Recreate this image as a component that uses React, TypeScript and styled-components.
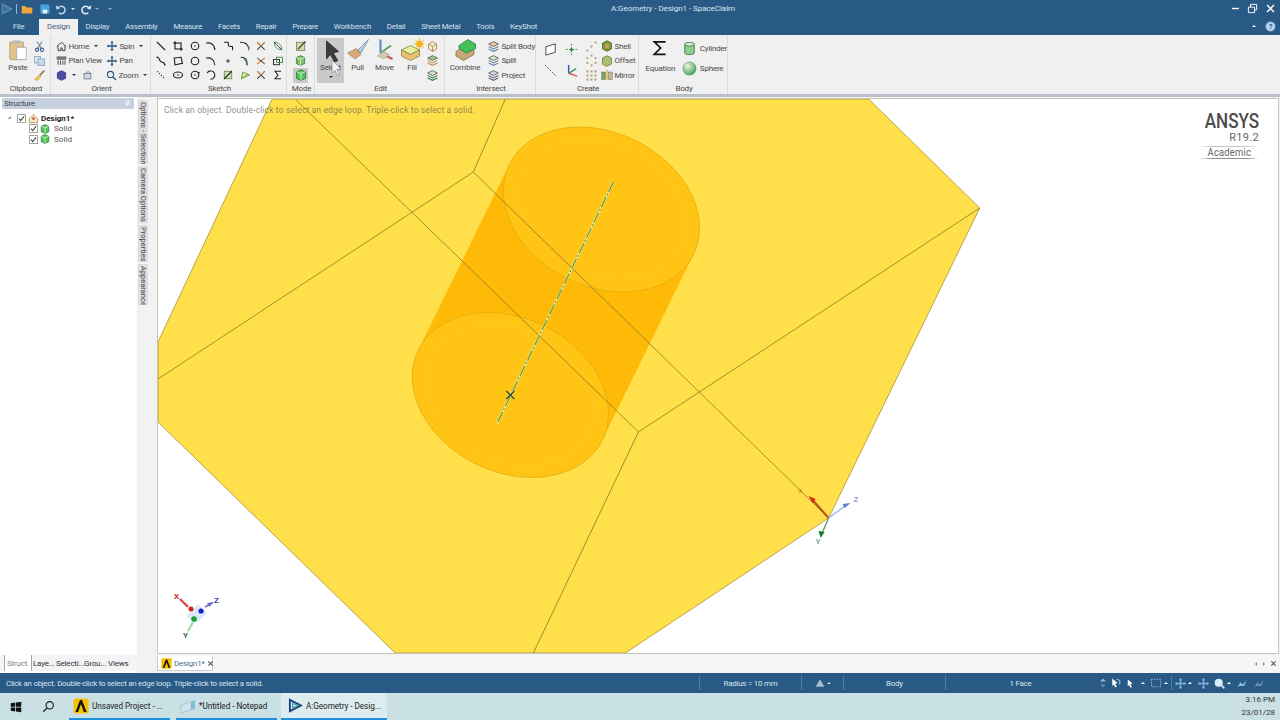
import React from 'react';
import styled, { createGlobalStyle } from 'styled-components';

const FONT = `Roboto, "Liberation Sans", sans-serif`;
const BLUE = '#295a86';

const GlobalStyle = createGlobalStyle`
  html, body { margin: 0; padding: 0; background: #f0f0f0; }
  body { font-family: ${FONT}; font-size: 8px; letter-spacing: -0.2px; color: #333; overflow: hidden; }
`;

const Window = styled.div`
  width: 1280px;
  height: 720px;
  display: flex;
  flex-direction: column;
  position: relative;
  overflow: hidden;
`;

const Gap = styled.span<{ $w: number }>`
  display: inline-block;
  flex: none;
  width: ${(p) => p.$w}px;
`;

/* ---------- title bar and tabs ---------- */

const TitleBar = styled.div`
  height: 17px;
  background: ${BLUE};
  display: flex;
  align-items: center;
  color: #dbe6ef;
`;

const Quick = styled.div`
  width: 611px;
  display: flex;
  align-items: center;
  padding-left: 1px;
  box-sizing: border-box;
`;

const QuickBar = styled.span`
  width: 1px;
  height: 10px;
  background: #9fb6ca;
`;

const Title = styled.div`
  font-size: 8px;
  letter-spacing: -0.05px;
  flex: 1;
`;

const WinControls = styled.div`
  display: flex;
  align-items: center;
  gap: 6.5px;
  padding-right: 4.5px;
`;

const TabBar = styled.div`
  height: 18px;
  background: ${BLUE};
  display: flex;
  align-items: stretch;
  padding-left: 5px;
`;

const Tab = styled.div<{ $active?: boolean; $mr?: number }>`
  padding: 0 7.9px 1px;
  margin-right: ${(p) => p.$mr ?? 0}px;
  display: flex;
  align-items: center;
  font-size: 7.8px;
  letter-spacing: -0.2px;
  color: ${(p) => (p.$active ? '#48607a' : '#d5e2ec')};
  background: ${(p) => (p.$active ? '#f0f0f0' : 'transparent')};
  margin-top: 2px;
  white-space: nowrap;
`;

const TabRight = styled.div`
  margin-left: auto;
  display: flex;
  align-items: center;
  gap: 9px;
  padding-right: 4px;
`;

/* ---------- ribbon ---------- */

const Ribbon = styled.div`
  height: 59px;
  background: #f0f0f0;
  display: flex;
`;

const RibbonRule = styled.div`
  height: 3px;
  background: #b9c0ca;
`;

const Group = styled.div<{ $w: number }>`
  width: ${(p) => p.$w}px;
  display: flex;
  flex-direction: column;
  border-right: 1px solid #dcdcdc;
  box-sizing: border-box;
`;

const GroupBody = styled.div<{ $pl?: number }>`
  height: 47px;
  padding: 3px 0 0 ${(p) => p.$pl ?? 0}px;
  display: flex;
`;

const GroupLabel = styled.div`
  height: 10px;
  line-height: 10px;
  text-align: center;
  padding-left: 2px;
  color: #4a4a4a;
  font-size: 8px;
`;

const Stack = styled.div<{ $w?: number; $ml?: number; $pt?: number }>`
  display: flex;
  flex-direction: column;
  padding-top: ${(p) => p.$pt ?? 1}px;
  margin-left: ${(p) => p.$ml ?? 0}px;
  ${(p) => (p.$w ? `width: ${p.$w}px;` : '')}
`;

const ToolRow = styled.div<{ $h?: number; $center?: boolean; $gap?: number }>`
  height: ${(p) => p.$h ?? 14.5}px;
  display: flex;
  align-items: center;
  gap: ${(p) => p.$gap ?? 1.5}px;
  color: #4a4a4a;
  font-size: 8px;
  white-space: nowrap;
  ${(p) => (p.$center ? 'justify-content: center;' : '')}
`;

const BigTool = styled.div<{ $w: number; $active?: boolean }>`
  width: ${(p) => p.$w}px;
  height: 45px;
  display: flex;
  flex-direction: column;
  align-items: center;
  color: #4a4a4a;
  font-size: 8px;
  box-sizing: border-box;
  background: ${(p) => (p.$active ? '#c9c9c9' : 'transparent')};
`;

const BigLabel = styled.div<{ $mt?: number }>`
  margin-top: ${(p) => p.$mt ?? 0}px;
  height: 11px;
  line-height: 11px;
`;

const Caret = styled.span<{ $up?: boolean; $c?: string; $ml?: number; $mt?: number; $turn?: number }>`
  display: inline-block;
  flex: none;
  width: 0;
  height: 0;
  margin-left: ${(p) => p.$ml ?? 2}px;
  margin-top: ${(p) => p.$mt ?? 0}px;
  border-left: 2px solid transparent;
  border-right: 2px solid transparent;
  ${(p) =>
    p.$up
      ? `border-bottom: 2.5px solid ${p.$c ?? '#333'};`
      : `border-top: 2.5px solid ${p.$c ?? '#333'};`}
  ${(p) => (p.$turn ? `transform: rotate(${p.$turn}deg);` : '')}
`;

const SketchGrid = styled.div`
  display: grid;
  grid-template-columns: repeat(8, 16.7px);
  grid-auto-rows: 14.5px;
  padding-top: 1px;
  padding-left: 2px;
  place-items: center;
`;

const ModeCell = styled.div<{ $active?: boolean }>`
  width: 15px;
  height: 14.5px;
  display: flex;
  align-items: center;
  justify-content: center;
  background: ${(p) => (p.$active ? '#c9c9c9' : 'transparent')};
`;

/* ---------- workspace ---------- */

const Workspace = styled.div`
  flex: 1;
  display: flex;
  min-height: 0;
  background: #f2f2f2;
`;

const LeftPane = styled.div`
  width: 137px;
  background: #fff;
  display: flex;
  flex-direction: column;
`;

const PaneHeader = styled.div`
  height: 11px;
  margin: 1px 3px 0 2px;
  padding: 0 3px 0 2px;
  background: #c6d0de;
  color: #445;
  font-size: 8px;
  line-height: 11px;
  display: flex;
  justify-content: space-between;
  align-items: center;
`;

const Tree = styled.div`
  flex: 1;
  padding-top: 4px;
`;

const TreeRow = styled.div<{ $indent: number; $root?: boolean }>`
  height: 10.5px;
  display: flex;
  align-items: center;
  gap: 2px;
  padding-left: ${(p) => p.$indent}px;
  font-size: 8px;
  letter-spacing: ${(p) => (p.$root ? '0' : '0.1px')};
  color: ${(p) => (p.$root ? '#222' : '#555')};
  font-weight: ${(p) => (p.$root ? 700 : 400)};
`;

const TreeLabel = styled.span`
  margin-left: 2px;
`;

const CheckBox = styled.span`
  width: 7px;
  height: 7px;
  border: 1px solid #a4a4a4;
  background: #fff;
  display: inline-flex;
  align-items: center;
  justify-content: center;
  flex: none;
`;

const PaneTabs = styled.div`
  height: 16px;
  background: #f4f4f6;
  display: flex;
  align-items: center;
  padding-left: 4px;
  margin-bottom: 2px;
`;

const PaneTab = styled.div<{ $active?: boolean; $w: number }>`
  width: ${(p) => p.$w}px;
  height: 100%;
  display: flex;
  align-items: center;
  padding-left: ${(p) => (p.$active ? 2 : 1)}px;
  box-sizing: border-box;
  font-size: 8px;
  color: ${(p) => (p.$active ? '#7a8595' : '#333')};
  background: ${(p) => (p.$active ? '#fff' : 'transparent')};
  border-left: ${(p) => (p.$active ? '1px solid #9aa' : 'none')};
  border-right: ${(p) => (p.$active ? '1px solid #9aa' : 'none')};
  white-space: nowrap;
`;

const Rail = styled.div`
  width: 20px;
  padding-top: 3px;
  display: flex;
  flex-direction: column;
  gap: 2px;
  box-sizing: border-box;
`;

const RailTab = styled.div<{ $h: number }>`
  width: 10px;
  margin-left: 1px;
  height: ${(p) => p.$h}px;
  background: #dedede;
  color: #444;
  font-size: 7.5px;
  line-height: 10px;
  letter-spacing: 0;
  writing-mode: vertical-rl;
  padding-top: 2px;
  box-sizing: border-box;
  white-space: nowrap;
  overflow: hidden;
`;

const Center = styled.div`
  flex: 1;
  display: flex;
  flex-direction: column;
  min-width: 0;
`;

const Viewport = styled.div`
  flex: 1;
  margin: 1px 1px 1px 0;
  border: 1px solid #c8c4b6;
  background: #fff;
  position: relative;
  overflow: hidden;
`;

const Scene = styled.svg`
  display: block;
  width: 100%;
  height: 100%;
`;

const Hint = styled.div`
  position: absolute;
  left: 6px;
  top: 6px;
  font-size: 8.5px;
  letter-spacing: 0.13px;
  color: rgba(85, 85, 85, 0.68);
  white-space: nowrap;
`;

const Brand = styled.div`
  position: absolute;
  right: 19px;
  top: 13px;
  width: 60px;
  display: flex;
  flex-direction: column;
  align-items: flex-end;
  color: #4c4c4c;
`;

const BrandName = styled.div`
  font-size: 19.5px;
  line-height: 19px;
  font-weight: 500;
  letter-spacing: 0;
  transform: scaleX(0.875);
  transform-origin: right center;
`;

const BrandVersion = styled.div`
  margin-top: 1px;
  font-size: 11px;
  line-height: 12px;
  letter-spacing: 0.3px;
  color: #666;
`;

const BrandTier = styled.div`
  margin-top: 2px;
  align-self: stretch;
  text-align: center;
  font-size: 11px;
  line-height: 13px;
  letter-spacing: 0.2px;
  color: #666;
  background-image: linear-gradient(90deg, transparent, #c4c4c4 20%, #c4c4c4 80%, transparent),
    linear-gradient(90deg, transparent, #8c8c8c 20%, #8c8c8c 80%, transparent);
  background-size: 100% 1px;
  background-position: top, bottom;
  background-repeat: no-repeat;
`;

const BrandTierText = styled.span`
  display: inline-block;
  transform: scaleX(0.86);
`;

const DocTabs = styled.div`
  height: 18px;
  background: #f6f6f8;
  display: flex;
  align-items: flex-start;
  padding-top: 1px;
  box-sizing: border-box;
`;

const DocTab = styled.div`
  width: 56px;
  height: 15px;
  display: flex;
  align-items: center;
  gap: 2px;
  padding-left: 3px;
  box-sizing: border-box;
  border: 1px solid #c9c9c9;
  border-top: none;
  background: #fff;
  font-size: 8px;
  color: #52708f;
`;

const DocNav = styled.div`
  margin-left: auto;
  height: 15px;
  display: flex;
  align-items: center;
  gap: 4px;
  padding-right: 3px;
`;

/* ---------- status bar ---------- */

const StatusBar = styled.div`
  height: 20px;
  background: ${BLUE};
  display: flex;
  align-items: center;
  color: #d8e3ec;
  font-size: 7.9px;
`;

const StatusText = styled.div`
  flex: none;
  width: 699px;
  padding-left: 6px;
  box-sizing: border-box;
  letter-spacing: -0.25px;
`;

const StatusCell = styled.div<{ $w: number }>`
  flex: none;
  width: ${(p) => p.$w}px;
  height: 14px;
  border-left: 1px solid #4f7da6;
  display: flex;
  align-items: center;
  justify-content: center;
  box-sizing: border-box;
`;

const StatusTools = styled.div`
  flex: 1;
  display: flex;
  align-items: center;
  padding-left: 2px;
`;

const StatusSep = styled.span`
  width: 1px;
  height: 14px;
  background: #4f7da6;
`;

/* ---------- taskbar ---------- */

const Taskbar = styled.div`
  height: 27px;
  background: #c9e0e5;
  display: flex;
  align-items: stretch;
  color: #222;
`;

const TaskIcon = styled.div<{ $w: number }>`
  width: ${(p) => p.$w}px;
  display: flex;
  align-items: center;
  justify-content: center;
`;

const TaskButton = styled.div<{ $w: number; $active?: boolean; $ml?: number; $pl?: number }>`
  width: ${(p) => p.$w}px;
  margin-left: ${(p) => p.$ml ?? 0}px;
  display: flex;
  align-items: center;
  gap: 3px;
  padding-left: ${(p) => p.$pl ?? 4}px;
  box-sizing: border-box;
  font-size: 8.2px;
  letter-spacing: -0.05px;
  white-space: nowrap;
  background: ${(p) => (p.$active ? '#dcecef' : 'transparent')};
  border-bottom: 2px solid #1d8fdc;
`;

const Clock = styled.div`
  margin-left: auto;
  padding-right: 5px;
  display: flex;
  flex-direction: column;
  align-items: flex-end;
  justify-content: center;
  gap: 5px;
  font-size: 8px;
  line-height: 8px;
  letter-spacing: 0;
  color: #333;
`;

const Pointer = styled.svg`
  position: absolute;
  left: 331px;
  top: 59px;
`;

/* ---------- icons ---------- */

const Ico: React.FC<{ s?: number; w?: number; children: React.ReactNode }> = ({ s = 13, w, children }) => (
  <svg width={w ?? s} height={s} viewBox="0 0 16 16" fill="none" style={{ flex: 'none' }}>
    {children}
  </svg>
);

const k = { stroke: '#222', strokeWidth: 1.5, strokeLinecap: 'round' as const };
const dot = (x: number, y: number, c = '#222', r = 1.1) => <circle cx={x} cy={y} r={r} fill={c} />;

const XMark = ({ c = '#d9822b' }) => (
  <>
    <path d="M3 3l10 10M13 3L3 13" stroke="#222" strokeWidth={1.4} />
    <path d="M3 3l5 5M13 3L8 8" stroke={c} strokeWidth={1.4} />
  </>
);

const sketchIcons: React.ReactNode[] = [
  <path d="M3 3l10 10" {...k} />,
  <><rect x="4" y="4" width="8" height="8" {...k} /><path d="M2 4h3M12 12h2M4 2v3M12 11v3" {...k} /></>,
  <><circle cx="8" cy="8" r="5" {...k} />{dot(8, 8)}</>,
  <><path d="M2 4c6-1 10 2 11 8" {...k} />{dot(13, 12)}</>,
  <path d="M3 3h5l1 5 5 1v4" {...k} />,
  <><path d="M2 3c6 0 10 3 11 8" {...k} /><path d="M13 8v6" stroke="#2a8a4a" strokeWidth={1.5} /></>,
  <XMark />,
  <><path d="M3 3c6 0 10 4 10 10C7 13 3 9 3 3z" stroke="#3d8f4f" strokeWidth={1.2} /><path d="M3 3l10 10" stroke="#222" /></>,
  <><path d="M3 3c4 0 2 5 5 6s5 1 5 4" {...k} />{dot(3, 3)}{dot(13, 13)}</>,
  <path d="M3 4l9-1 2 8-10 2z" {...k} />,
  <circle cx="8" cy="8" r="5" {...k} />,
  <path d="M2 4c6-1 10 2 11 9" {...k} />,
  <circle cx="8" cy="8" r="1.6" stroke="#222" strokeWidth={1.2} />,
  <><path d="M3 3c5 0 8 3 8 10" {...k} /><path d="M6 6c3 0 4 3 4 7" stroke="#2a8a4a" strokeWidth={1.2} /></>,
  <><path d="M3 12L13 4" stroke="#d9822b" strokeWidth={1.5} /><path d="M3 4l10 8" stroke="#222" strokeWidth={1.3} /></>,
  <><rect x="2" y="6" width="8" height="7" stroke="#222" strokeWidth={1.2} /><rect x="6" y="3" width="8" height="7" stroke="#3d8f4f" strokeWidth={1.2} /></>,
  <path d="M3 3l10 10" stroke="#222" strokeWidth={1.4} strokeDasharray="1.5 2" />,
  <><ellipse cx="8" cy="8" rx="6" ry="4" {...k} />{dot(8, 8)}</>,
  <><circle cx="8" cy="8" r="5" {...k} />{dot(8, 8)}{dot(13, 5, '#222', 1.3)}</>,
  <path d="M3 5a5.5 5.5 0 1 1 5 8.5" {...k} strokeDasharray="5 1.5" />,
  <><rect x="3" y="3" width="10" height="10" fill="#cfe0b8" stroke="#5a7a3a" /><path d="M3 13L13 3" stroke="#222" strokeWidth={1.5} /></>,
  <><path d="M3 13L14 8 5 4z" fill="#dfe8b0" stroke="#5f9a3a" strokeWidth={1.2} /><path d="M3 13l9-7" stroke="#a88a2a" /></>,
  <XMark />,
  <path d="M12 3H4l4 5-4 5h8" stroke="#222" strokeWidth={1.4} />,
];

const Cube = ({ c = '#52c25a', s = 12 }) => (
  <Ico s={s}>
    <path d="M8 1l6 2.5v9L8 15l-6-2.5v-9z" fill={c} stroke="#1f6f2a" />
    <path d="M8 6v9M8 6L2 3.5M8 6l6-2.5" stroke="#eafbe6" strokeWidth={1.1} />
  </Ico>
);

const LayerIcon = ({ a = '#9bc48f', b = '#c98d5a' }) => (
  <Ico s={13}>
    <path d="M8 2l6 3-6 3-6-3z" fill={a} stroke="#555" />
    <path d="M2 8l6 3 6-3M2 11l6 3 6-3" stroke={b} strokeWidth={1.4} />
  </Ico>
);

const AnsysLogo = ({ s = 16 }) => (
  <Ico s={s}>
    <rect x="0.5" y="0.5" width="15" height="15" rx="2" fill="#f6c000" />
    <path d="M2.5 14L7 2h2l4.5 12h-2.6L8 6l-2.9 8z" fill="#111" />
  </Ico>
);

const SpaceClaimLogo = ({ s = 15, dim }: { s?: number; dim?: boolean }) => (
  <Ico s={s}>
    <g opacity={dim ? 0.7 : 1}>
      <path d="M2 2l12 6-12 6z" stroke={dim ? '#7f9cc0' : '#1f3f7a'} strokeWidth={2} fill="none" />
      <path d="M5 5.5l5.5 2.5L5 10.5z" stroke="#39a0a8" strokeWidth={1.4} />
    </g>
  </Ico>
);

const Spin = ({ c = '#2a5f92', s = 13 }) => (
  <Ico s={s}>
    <path d="M8 2v12M2 8h12" stroke={c} strokeWidth={1.8} />
    <path d="M8 1l2 3H6zM8 15l2-3H6zM1 8l3-2v4zM15 8l-3-2v4z" fill={c} />
  </Ico>
);

const Zoomer = ({ c = '#244f7a' }) => (
  <Ico s={11}>
    <circle cx="6.5" cy="6.5" r="4.5" stroke={c} strokeWidth={1.5} fill="#dff0fb" />
    <path d="M10 10l4.5 4.5" stroke={c} strokeWidth={2} />
  </Ico>
);

const Tick = () => (
  <svg width="7" height="7" viewBox="0 0 8 8" fill="none">
    <path d="M1 4l2 2.5L7 1.5" stroke="#3a4a3a" strokeWidth={1.2} />
  </svg>
);

const CloseX = () => (
  <Ico s={7}>
    <path d="M3 3l10 10M13 3L3 13" stroke="#555" strokeWidth={2.4} />
  </Ico>
);

/* ---------- 3D scene ---------- */

const Cap = ({ cx, cy }: { cx: number; cy: number }) => (
  <g transform={`translate(${cx} ${cy}) rotate(26)`}>
    <ellipse rx={102.4} ry={77} fill="#ffc414" stroke="#e0aa10" strokeWidth={0.7} />
    <ellipse rx={87} ry={66} fill="none" stroke="#f9c92a" strokeWidth={0.7} />
  </g>
);

const Triad = () => (
  <g fontFamily={FONT} fontSize={8} fontWeight={700}>
    <path d="M198 604l9 9-10 10-11-6z" fill="#d6e6f8" opacity={0.9} />
    <path d="M180 599l8 8" stroke="#d84848" strokeWidth={2.4} />
    <path d="M205 607l7-4" stroke="#6f6fd8" strokeWidth={1.6} />
    <path d="M214 602l-7 1 2 4z" fill="#6f6fd8" />
    <path d="M193 622l-5 9" stroke="#a8d8a8" strokeWidth={2.4} />
    <circle cx={191} cy={609} r={2.5} fill="#d42020" />
    <circle cx={201} cy={611} r={2.6} fill="#1a1ad0" />
    <circle cx={194} cy={619} r={2.8} fill="#1f9a3a" />
    <text x={174} y={599} fill="#c83030">X</text>
    <text x={214} y={603} fill="#3a3ab0">Z</text>
    <text x={183} y={638} fill="#2a6a3a">Y</text>
  </g>
);

const Gizmo = () => (
  <g fontFamily={FONT} fontSize={8}>
    <path d="M828 518L812 500" stroke="#b8501a" strokeWidth={2} />
    <path d="M808 496l7 3-3 4z" fill="#e0201a" />
    <path d="M828 518l18-13" stroke="#a8c0ec" strokeWidth={1.6} />
    <path d="M850 503l-8 1 2 4z" fill="#5a80d8" />
    <path d="M828 518l-6 14" stroke="#6a9a5a" strokeWidth={1.4} />
    <path d="M820 538l-2-7 6 1z" fill="#0f7a2a" />
    <text x={798} y={493} fill="#c8781a">x</text>
    <text x={853} y={502} fill="#9a9ad8" fontWeight={700}>Z</text>
    <text x={815} y={544} fill="#7ab08a" fontWeight={700}>Y</text>
  </g>
);

const Scene3D = () => (
  <Scene viewBox="158 99 1119 554" preserveAspectRatio="none">
    <polygon
      points="272,99 868,99 979,208 828,518 625,653 395,653 158,422 158,342"
      fill="#ffe04a"
      stroke="#a89336"
      strokeWidth={0.8}
    />
    <polygon points="418,350 509,164.5 693,254.4 602,440" fill="#ffba08" />
    <Cap cx={601} cy={209.5} />
    <Cap cx={510} cy={395} />
    <g stroke="#8a7a22" strokeWidth={0.8} fill="none">
      <path d="M158 379L473 172L505 99" />
      <path d="M473 172L828 518" />
      <path d="M296 100L638 432L979 208" />
      <path d="M638 432L533 653" />
    </g>
    <path d="M613 182L497 423" stroke="#e8efb0" strokeWidth={1.8} />
    <path d="M613 182L497 423" stroke="#3f8f3a" strokeWidth={1} strokeDasharray="11 2 2 2" />
    <path d="M506 391l8 8M514 391l-8 8" stroke="#1e4a3a" strokeWidth={1.2} />
    <Gizmo />
    <Triad />
  </Scene>
);

/* ---------- page ---------- */

const tabs = ['File', 'Design', 'Display', 'Assembly', 'Measure', 'Facets', 'Repair', 'Prepare', 'Workbench', 'Detail', 'Sheet Metal', 'Tools', 'KeyShot'];

const railTabs: [string, number][] = [
  ['Options - Selection', 64],
  ['Camera Options', 57],
  ['Properties', 37],
  ['Appearance', 41],
];

export default function App() {
  return (
    <Window>
      <GlobalStyle />
      <TitleBar>
        <Quick>
          <SpaceClaimLogo s={12} dim />
          <Gap $w={3} />
          <QuickBar />
          <Gap $w={4} />
          <Ico s={12}><path d="M1 4h5l1 2h8v8H1z" fill="#f0a63a" /></Ico>
          <Gap $w={6} />
          <Ico s={12}><path d="M2 2h10l2 2v10H2z" fill="#4aa6e0" /><rect x="5" y="9" width="6" height="5" fill="#dff1fb" /></Ico>
          <Gap $w={4} />
          <Ico s={12}><path d="M4 7a5 5 0 1 1 1 6" stroke="#bcd7ee" strokeWidth={2} /><path d="M1 3l1 6 5-2z" fill="#bcd7ee" /></Ico>
          <Caret $c="#dbe6ef" $ml={4} />
          <Gap $w={5} />
          <Ico s={12}><path d="M12 7a5 5 0 1 0-1 6" stroke="#e4eef6" strokeWidth={2} /><path d="M15 3l-1 6-5-2z" fill="#e4eef6" /></Ico>
          <Caret $c="#8fa9c0" $ml={3} />
          <Gap $w={9} />
          <Caret $c="#8fa9c0" $ml={0} />
        </Quick>
        <Title>A:Geometry - Design1 - SpaceClaim</Title>
        <WinControls>
          <Ico s={11}><path d="M3 8h10" stroke="#fff" strokeWidth={2} /></Ico>
          <Ico s={11}><path d="M2 6h9v8H2zM5 6V2h9v8h-3" stroke="#fff" strokeWidth={1.4} /></Ico>
          <Ico s={11}><path d="M3 3l10 10M13 3L3 13" stroke="#fff" strokeWidth={2.2} /></Ico>
        </WinControls>
      </TitleBar>
      <TabBar>
        {tabs.map((t) => (
          <Tab key={t} $active={t === 'Design'} $mr={t === 'File' ? 7 : 0}>{t}</Tab>
        ))}
        <TabRight>
          <Caret $up $c="#fff" />
          <Ico s={11}>
            <circle cx="8" cy="8" r="7" fill="#bcd6f0" stroke="#5a8ac0" />
            <text x="8" y="12" textAnchor="middle" fontSize="11" fontWeight={700} fontFamily={FONT} fill="#2a5a9a">?</text>
          </Ico>
        </TabRight>
      </TabBar>

      <Ribbon>
        <Group $w={51}>
          <GroupBody $pl={7}>
            <BigTool $w={22}>
              <Ico s={24} w={22}>
                <rect x="2" y="2" width="10" height="13" rx="1" fill="#e0c48c" stroke="#a88c58" strokeWidth={0.5} />
                <rect x="4.5" y="1" width="5" height="2.5" fill="#b9b9b9" />
                <path d="M7 6h7v9H7z" fill="#fff" stroke="#999" strokeWidth={0.5} />
              </Ico>
              <BigLabel>Paste</BigLabel>
            </BigTool>
            <Stack $ml={4}>
              <ToolRow><Ico s={13}><path d="M5 2l5 8M11 2L6 10" stroke="#7a8a9a" strokeWidth={1.3} /><circle cx="5" cy="12" r="2" stroke="#3a5a8a" strokeWidth={1.3} /><circle cx="11" cy="12" r="2" stroke="#3a5a8a" strokeWidth={1.3} /></Ico></ToolRow>
              <ToolRow><Ico s={13}><rect x="2" y="3" width="7" height="8" fill="#dfe9f5" stroke="#7f9cc0" /><rect x="6" y="6" width="8" height="8" fill="#c8daf0" stroke="#7f9cc0" /></Ico></ToolRow>
              <ToolRow><Ico s={13}><path d="M14 2L8 8" stroke="#8a7a5a" strokeWidth={2} /><path d="M8 7l2 2-4 5-4-1z" fill="#e8c84a" stroke="#a88a2a" strokeWidth={0.5} /></Ico></ToolRow>
            </Stack>
          </GroupBody>
          <GroupLabel>Clipboard</GroupLabel>
        </Group>

        <Group $w={100}>
          <GroupBody $pl={5}>
            <Stack $w={50}>
              <ToolRow><Ico s={11}><path d="M1 8l7-6 7 6M3 7v7h4v-4h2v4h4V7" stroke="#333" strokeWidth={1.3} /></Ico>Home<Caret $ml={3} /></ToolRow>
              <ToolRow><Ico s={11}><rect x="1" y="2" width="14" height="5" fill="#777" /><path d="M3 8v6M6.5 8v6M10 8v6M13 8v6" stroke="#555" strokeWidth={1.5} /></Ico>Plan View</ToolRow>
              <ToolRow><Ico s={11}><path d="M8 1l6 3v8l-6 3-6-3V4z" fill="#4e4ea8" stroke="#2a2a70" /></Ico><Caret $ml={3} /><Gap $w={3} /><Ico s={11}><rect x="3" y="5" width="10" height="8" fill="#cfd8e2" stroke="#667" /><path d="M5 5l4-3 4 3" stroke="#667" /></Ico></ToolRow>
            </Stack>
            <Stack $w={44}>
              <ToolRow><Spin s={12} />Spin<Caret $ml={3} /></ToolRow>
              <ToolRow><Spin s={12} c="#3a5f88" />Pan</ToolRow>
              <ToolRow><Zoomer />Zoom<Caret $ml={3} /></ToolRow>
            </Stack>
          </GroupBody>
          <GroupLabel>Orient</GroupLabel>
        </Group>

        <Group $w={136}>
          <GroupBody>
            <SketchGrid>
              {sketchIcons.map((icon, i) => (
                <Ico key={i} s={12}>{icon}</Ico>
              ))}
            </SketchGrid>
          </GroupBody>
          <GroupLabel>Sketch</GroupLabel>
        </Group>

        <Group $w={28}>
          <GroupBody $pl={6}>
            <Stack>
              <ModeCell><Ico s={12}><rect x="2" y="3" width="11" height="11" fill="#cfe0a8" stroke="#6a7a4a" /><path d="M4 12L14 2" stroke="#444" strokeWidth={1.6} /></Ico></ModeCell>
              <ModeCell><Cube s={11} c="#7fbf6a" /></ModeCell>
              <ModeCell $active><Cube s={12} /></ModeCell>
            </Stack>
          </GroupBody>
          <GroupLabel>Mode</GroupLabel>
        </Group>

        <Group $w={130}>
          <GroupBody $pl={2}>
            <BigTool $w={27} $active>
              <Ico s={24}><path d="M5 2l8 7-3.5 1 3 5-2 1-3-5-2.5 3z" fill="#3c3c3c" stroke="#222" strokeWidth={0.5} /></Ico>
              <BigLabel>Select</BigLabel>
              <Caret $ml={0} $mt={3} />
            </BigTool>
            <BigTool $w={27}>
              <Ico s={24}><path d="M1 10l6-3 3 4-4 3z" fill="#d8a878" stroke="#a07848" strokeWidth={0.4} /><path d="M15 1L8 8l2 2z" fill="#b8cce4" stroke="#6a8ab0" strokeWidth={0.5} /></Ico>
              <BigLabel>Pull</BigLabel>
            </BigTool>
            <BigTool $w={27}>
              <Ico s={24}><path d="M5 1v9" stroke="#5a8ac8" strokeWidth={1.4} /><path d="M5 10l8 4" stroke="#c85a5a" strokeWidth={1.4} /><path d="M5 10l7-5" stroke="#5aa85a" strokeWidth={1.4} /><path d="M3 12l4-3 4 2-4 3z" fill="#d8c8b0" stroke="#998" strokeWidth={0.4} /></Ico>
              <BigLabel>Move</BigLabel>
            </BigTool>
            <BigTool $w={28}>
              <Ico s={24}><path d="M1 8l6-3 6 3-6 3z" fill="#dff0a0" stroke="#6a8a3a" strokeWidth={0.5} /><path d="M1 8v4l6 3 6-3V8l-6 3z" fill="#e8c070" stroke="#8a7a3a" strokeWidth={0.5} /><circle cx="13" cy="4" r="2.2" fill="#f6b21a" /><path d="M13 0v8M9 4h8M10 1l6 6M16 1l-6 6" stroke="#f6b21a" strokeWidth={0.6} /></Ico>
              <BigLabel>Fill</BigLabel>
            </BigTool>
            <Stack>
              <ToolRow $center><Ico s={13}><path d="M8 2l5 3v6l-5 3-5-3V5z" fill="#f4e8d0" stroke="#a8804a" /><path d="M8 8V14M3 5l5 3 5-3" stroke="#a8804a" /></Ico></ToolRow>
              <ToolRow $center><LayerIcon /></ToolRow>
              <ToolRow $center><LayerIcon a="#cfe8c0" b="#3a7a5a" /></ToolRow>
            </Stack>
          </GroupBody>
          <GroupLabel>Edit</GroupLabel>
        </Group>

        <Group $w={91}>
          <GroupBody>
            <BigTool $w={40}>
              <Ico s={24} w={26}>
                <path d="M2 9l7-4 5 3v3l-7 4-5-3z" fill="#c8a878" stroke="#7a6a4a" strokeWidth={0.5} />
                <path d="M4 5l6-4 5 3v3l-6 3-5-3z" fill="#45c05a" stroke="#1f7a3a" strokeWidth={0.5} />
              </Ico>
              <BigLabel>Combine</BigLabel>
            </BigTool>
            <Stack $ml={2}>
              <ToolRow><LayerIcon a="#e8c8a0" b="#5a8aa0" />Split Body</ToolRow>
              <ToolRow><LayerIcon a="#cfe8c0" b="#6a8ab0" />Split</ToolRow>
              <ToolRow><LayerIcon a="#c8d8e8" b="#667" />Project</ToolRow>
            </Stack>
          </GroupBody>
          <GroupLabel>Intersect</GroupLabel>
        </Group>

        <Group $w={103}>
          <GroupBody $pl={3}>
            <Stack $w={22}>
              <ToolRow $h={21} $center><Ico s={15}><path d="M3 5l10-3v9L3 14z" fill="#fff" stroke="#444" /></Ico></ToolRow>
              <ToolRow $h={21} $center><Ico s={15}><path d="M2 2l12 12" stroke="#555" strokeDasharray="2 1.5" /></Ico></ToolRow>
            </Stack>
            <Stack $w={21}>
              <ToolRow $h={21} $center><Ico s={13}><path d="M8 1v14M1 8h14" stroke="#2a8a4a" strokeDasharray="2.5 1.5" /><circle cx="8" cy="8" r="2" fill="#2a8a4a" /></Ico></ToolRow>
              <ToolRow $h={21} $center><Ico s={15}><path d="M5 11V2" stroke="#3a5ac8" strokeWidth={1.6} /><path d="M5 11l9 3" stroke="#d85a5a" strokeWidth={1.6} /><path d="M5 11l8-5" stroke="#3a9a5a" strokeWidth={1.6} /></Ico></ToolRow>
            </Stack>
            <Stack $w={19}>
              <ToolRow $center><Ico s={13}>{dot(3, 13, '#bba27a', 1.4)}{dot(8, 8, '#bba27a', 1.4)}{dot(13, 3, '#bba27a', 1.4)}</Ico></ToolRow>
              <ToolRow $center><Ico s={13}>{dot(8, 2, '#bba27a', 1.4)}{dot(13, 5, '#bba27a', 1.4)}{dot(13, 11, '#bba27a', 1.4)}{dot(8, 14, '#bba27a', 1.4)}{dot(3, 11, '#bba27a', 1.4)}{dot(3, 5, '#bba27a', 1.4)}</Ico></ToolRow>
              <ToolRow $center><Ico s={13}>{[3, 8, 13].flatMap((x) => [3, 8, 13].map((y) => <rect key={`${x}-${y}`} x={x - 1.3} y={y - 1.3} width="2.6" height="2.6" fill="#bba27a" />))}</Ico></ToolRow>
            </Stack>
            <Stack>
              <ToolRow><Ico s={12}><path d="M8 1l6 3v8l-6 3-6-3V4z" fill="#7a9a3a" stroke="#44602a" /><circle cx="8" cy="8" r="3" fill="#c8a060" /></Ico>Shell</ToolRow>
              <ToolRow><Ico s={12}><path d="M8 1l6 3v8l-6 3-6-3V4z" fill="#a8c070" stroke="#5a7a3a" /><path d="M1 11l6 4" stroke="#c8a060" strokeWidth={2} /></Ico>Offset</ToolRow>
              <ToolRow><Ico s={12}><rect x="1" y="4" width="5" height="10" fill="#7aa85a" stroke="#446" strokeWidth={0.5} /><rect x="10" y="4" width="5" height="10" fill="#c8b888" stroke="#446" strokeWidth={0.5} /><path d="M8 1v14" stroke="#e0a020" strokeWidth={1.4} /></Ico>Mirror</ToolRow>
            </Stack>
          </GroupBody>
          <GroupLabel>Create</GroupLabel>
        </Group>

        <Group $w={89}>
          <GroupBody $pl={3}>
            <BigTool $w={38}>
              <Ico s={20}><path d="M12.5 3H3.5l5 5-5 5h9" stroke="#111" strokeWidth={1.4} /></Ico>
              <BigLabel $mt={5}>Equation</BigLabel>
            </BigTool>
            <Stack $ml={3} $pt={0}>
              <ToolRow $h={20} $gap={3}>
                <Ico s={15}><path d="M3 3v10c0 2 10 2 10 0V3" fill="#8fcf8f" stroke="#3f7a4f" /><ellipse cx="8" cy="3.5" rx="5" ry="2" fill="#d8f0d8" stroke="#3f7a4f" /></Ico>Cylinder
              </ToolRow>
              <ToolRow $h={20} $gap={3}>
                <Ico s={15}>
                  <defs>
                    <radialGradient id="sph" cx="0.35" cy="0.3" r="0.8">
                      <stop offset="0" stopColor="#e8f8e0" />
                      <stop offset="1" stopColor="#3f9a4f" />
                    </radialGradient>
                  </defs>
                  <circle cx="8" cy="8" r="7" fill="url(#sph)" stroke="#3f7a4f" strokeWidth={0.5} />
                </Ico>Sphere
              </ToolRow>
            </Stack>
          </GroupBody>
          <GroupLabel>Body</GroupLabel>
        </Group>
      </Ribbon>
      <RibbonRule />

      <Workspace>
        <LeftPane>
          <PaneHeader>
            Structure
            <Ico s={7}><path d="M5 2h6v7H5zM8 9v5M3 9h10" stroke="#fff" strokeWidth={1.6} /></Ico>
          </PaneHeader>
          <Tree>
            <TreeRow $indent={8} $root>
              <Caret $ml={0} $c="#777" $turn={-45} />
              <Gap $w={1} />
              <CheckBox><Tick /></CheckBox>
              <Ico s={11}><path d="M2 8l6-6 6 6v6H2z" fill="#f2e4cc" stroke="#a8804a" /><circle cx="8" cy="8" r="2" fill="#c85a3a" /></Ico>
              <span>Design1*</span>
            </TreeRow>
            <TreeRow $indent={29}>
              <CheckBox><Tick /></CheckBox>
              <Cube s={10} />
              <TreeLabel>Solid</TreeLabel>
            </TreeRow>
            <TreeRow $indent={29}>
              <CheckBox><Tick /></CheckBox>
              <Cube s={10} />
              <TreeLabel>Solid</TreeLabel>
            </TreeRow>
          </Tree>
          <PaneTabs>
            <PaneTab $active $w={28}>Struct.</PaneTab>
            <PaneTab $w={23}>Laye...</PaneTab>
            <PaneTab $w={28}>Selecti...</PaneTab>
            <PaneTab $w={24}>Grou...</PaneTab>
            <PaneTab $w={26}>Views</PaneTab>
          </PaneTabs>
        </LeftPane>
        <Rail>
          {railTabs.map(([label, h]) => (
            <RailTab key={label} $h={h}>{label}</RailTab>
          ))}
        </Rail>
        <Center>
          <Viewport>
            <Scene3D />
            <Hint>Click an object. Double-click to select an edge loop. Triple-click to select a solid.</Hint>
            <Brand>
              <BrandName>ANSYS</BrandName>
              <BrandVersion>R19.2</BrandVersion>
              <BrandTier><BrandTierText>Academic</BrandTierText></BrandTier>
            </Brand>
          </Viewport>
          <DocTabs>
            <DocTab>
              <AnsysLogo s={11} />
              Design1*
              <CloseX />
            </DocTab>
            <DocNav>
              <Caret $ml={0} $c="#888" $turn={90} />
              <Caret $ml={0} $c="#888" $turn={-90} />
              <CloseX />
            </DocNav>
          </DocTabs>
        </Center>
      </Workspace>

      <StatusBar>
        <StatusText>Click an object. Double-click to select an edge loop. Triple-click to select a solid.</StatusText>
        <StatusCell $w={102}>Radius = 10 mm</StatusCell>
        <StatusCell $w={42}>
          <Ico s={10}><path d="M8 2l7 12H1z" fill="#a8bccd" /></Ico>
          <Caret $up $c="#c8d6e2" />
        </StatusCell>
        <StatusCell $w={102}>Body</StatusCell>
        <StatusCell $w={150}>1 Face</StatusCell>
        <StatusTools>
          <Ico s={12}><path d="M8 2l4 4H4z" fill="#9fb6ca" /><path d="M8 14l4-4H4z" fill="#5f86a8" /></Ico>
          <Gap $w={1} />
          <Ico s={12}><path d="M3 2l7 6-3 1 2 4-2 1-2-4-2 2z" fill="#fff" /><path d="M9 3a4 4 0 0 1 3 7" stroke="#b8d0e6" strokeWidth={1.3} /></Ico>
          <Gap $w={3} />
          <Ico s={11}><path d="M4 2l7 6-3 1 2 4-2 1-2-4-2 2z" fill="#fff" /></Ico>
          <Gap $w={5} />
          <Caret $up $c="#fff" $ml={0} />
          <Gap $w={5} />
          <Ico s={12}><rect x="2" y="3" width="12" height="10" stroke="#b8d0e6" strokeDasharray="2 1.5" /></Ico>
          <Gap $w={2} />
          <Caret $up $c="#fff" $ml={0} />
          <Gap $w={3} />
          <StatusSep />
          <Gap $w={2} />
          <Spin s={13} c="#7fb0dc" />
          <Gap $w={1} />
          <Caret $up $c="#fff" $ml={0} />
          <Gap $w={4.5} />
          <Spin s={13} c="#7fb0dc" />
          <Gap $w={3} />
          <Ico s={13}><circle cx="7" cy="7" r="5" fill="#dcecf8" /><path d="M10 10l4 4" stroke="#dcecf8" strokeWidth={2} /></Ico>
          <Gap $w={1} />
          <Caret $up $c="#fff" $ml={0} />
          <Gap $w={5.5} />
          <Ico s={12}><path d="M2 13l4-6 3 3 5-6-3 8H5z" fill="#8fc0ea" /></Ico>
          <Gap $w={5} />
          <Ico s={12}><path d="M2 13l4-6 3 3 5-6-3 8H5z" fill="#6f8ca6" /></Ico>
        </StatusTools>
      </StatusBar>

      <Taskbar>
        <TaskIcon $w={32}>
          <Ico s={12}><path d="M1 3l6-1v5.5H1zM8 2l7-1v6.5H8zM1 8.5h6V14l-6-1zM8 8.5h7V15l-7-1z" fill="#111" /></Ico>
        </TaskIcon>
        <TaskIcon $w={32}>
          <Ico s={13}><circle cx="9.5" cy="6.5" r="4.5" stroke="#111" strokeWidth={1.3} /><path d="M6 10l-4.5 4.5" stroke="#111" strokeWidth={1.5} /></Ico>
        </TaskIcon>
        <TaskButton $w={101} $ml={5}>
          <AnsysLogo />
          Unsaved Project - ...
        </TaskButton>
        <TaskButton $w={101} $ml={6}>
          <Ico s={16}><path d="M1 7l10-3v8L1 15z" fill="#cfe4ee" stroke="#8fb0c0" strokeWidth={0.5} /><path d="M11 4l4-2v9l-4 1z" fill="#7fc0d8" /></Ico>
          *Untitled - Notepad
        </TaskButton>
        <TaskButton $w={106} $ml={4} $active $pl={7}>
          <SpaceClaimLogo />
          A:Geometry - Desig...
        </TaskButton>
        <Clock>
          <span>3:16 PM</span>
          <span>23/01/28</span>
        </Clock>
      </Taskbar>

      <Pointer width="12" height="18" viewBox="0 0 12 18">
        <path d="M1 1l9 9-4 .5 2.5 5.5-2 1L4 11.5 1 14z" fill="#f4f4f4" stroke="#777" strokeWidth={0.6} />
      </Pointer>
    </Window>
  );
}
